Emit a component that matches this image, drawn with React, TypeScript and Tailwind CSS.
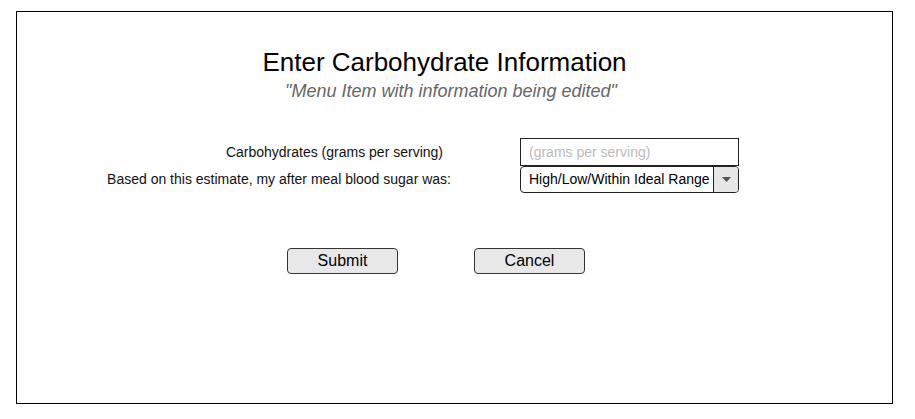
import React from 'react';

const font = { fontFamily: '"Liberation Sans", Arial, sans-serif' };

export default function App() {
  return (
    <div className="w-[915px] h-[419px] bg-white pt-[11px] pl-[16px]" style={font}>
      <div className="w-[877px] h-[393px] border border-black flex flex-col">
        {/* Heading */}
        <div className="mt-[35px] w-[855px] text-center text-[26px] leading-[30px] text-black">
          Enter Carbohydrate Information
        </div>
        <div className="mt-[3px] w-[868px] text-center text-[18px] leading-[22px] italic text-[#666666]">
          "Menu Item with information being edited"
        </div>

        {/* Form rows */}
        <div className="mt-[36px] flex items-center h-[28px]">
          <div className="w-[426px] text-right text-[14px] text-[#111111]">
            Carbohydrates (grams per serving)
          </div>
          <input
            className="ml-[77px] w-[219px] h-[28px] border border-[#222222] px-[8px] text-[14px] text-black placeholder:text-[#bbbbbb] outline-none"
            placeholder="(grams per serving)"
          />
        </div>
        <div className="flex items-center h-[27px]">
          <div className="w-[434px] text-right text-[14px] text-[#111111]">
            Based on this estimate, my after meal blood sugar was:
          </div>
          <div className="ml-[69px] w-[219px] h-[27px] border border-[#222222] rounded-[4px] flex overflow-hidden">
            <div className="flex-1 flex items-center pl-[8px] text-[14px] text-black">
              High/Low/Within Ideal Range
            </div>
            <div className="w-[25px] border-l border-[#222222] bg-[#e6e6e6] flex items-center justify-center">
              <svg width="9" height="5" viewBox="0 0 9 5">
                <path d="M0 0 L9 0 L4.5 5 Z" fill="#555555" />
              </svg>
            </div>
          </div>
        </div>

        {/* Buttons */}
        <div className="mt-[55px] flex pl-[270px] gap-[76px]">
          <button className="w-[111px] h-[26px] bg-[#e8e8e8] border border-[#333333] rounded-[4px] text-[16px] text-black leading-none">
            Submit
          </button>
          <button className="w-[111px] h-[26px] bg-[#e8e8e8] border border-[#333333] rounded-[4px] text-[16px] text-black leading-none">
            Cancel
          </button>
        </div>
      </div>
    </div>
  );
}
